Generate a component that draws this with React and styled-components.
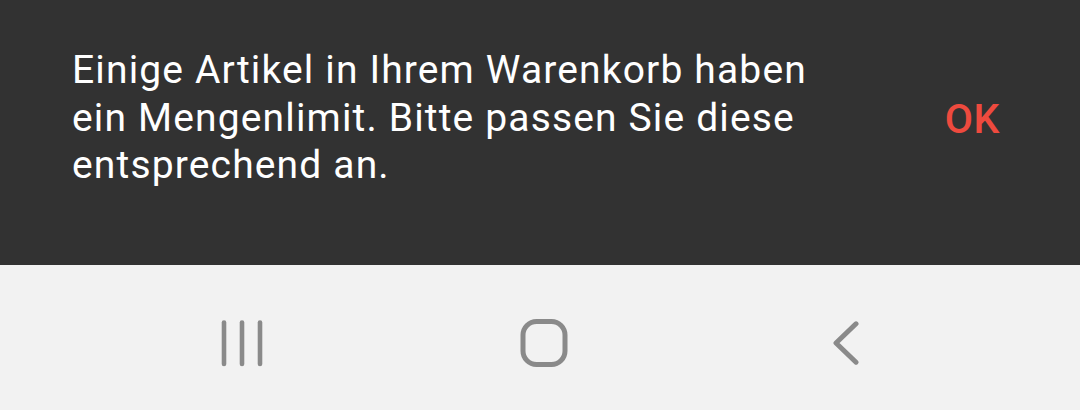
import React from "react";
import styled, { createGlobalStyle } from "styled-components";

const GlobalStyle = createGlobalStyle`
    html, body {
        margin: 0;
        padding: 0;
        background: #f2f2f2;
    }
    body {
        font-family: Roboto, "Noto Sans", "Liberation Sans", sans-serif;
        -webkit-font-smoothing: antialiased;
    }
`;

const iconGray = "#8a8a8a";

function RecentsIcon() {
    return <svg width="48" height="48" viewBox="0 0 48 48" fill="none">
        <g stroke={iconGray} strokeWidth="4.6" strokeLinecap="round">
            <line x1="6" y1="3.5" x2="6" y2="45" />
            <line x1="24" y1="3.5" x2="24" y2="45" />
            <line x1="42" y1="3.5" x2="42" y2="45" />
        </g>
    </svg>;
}

function HomeIcon() {
    return <svg width="48" height="48" viewBox="0 0 48 48" fill="none">
        <rect x="3" y="2.5" width="42" height="43" rx="13.5"
              stroke={iconGray} strokeWidth="5" />
    </svg>;
}

function BackIcon() {
    return <svg width="26" height="44" viewBox="0 0 26 44" fill="none">
        <path d="M23 2.8 L3 22 L23 41.2" stroke={iconGray} strokeWidth="5"
              strokeLinecap="round" strokeLinejoin="round" />
    </svg>;
}

function App() {
    return <Screen>
        <GlobalStyle />
        <Snackbar>
            <Message>
                Einige Artikel in Ihrem Warenkorb haben ein Mengenlimit. Bitte passen Sie diese entsprechend an.
            </Message>
            <ActionButton>OK</ActionButton>
        </Snackbar>
        <NavBar>
            <NavButton aria-label="Zuletzt verwendet"><RecentsIcon /></NavButton>
            <NavButton aria-label="Startbildschirm"><HomeIcon /></NavButton>
            <NavButton aria-label="Zurück"><BackIcon /></NavButton>
        </NavBar>
    </Screen>;
}

const Screen = styled.div`
    width: 1080px;
    height: 410px;
    display: flex;
    flex-direction: column;
    overflow: hidden;
`;
const Snackbar = styled.div`
    height: 265px;
    box-sizing: border-box;
    background-color: #323232;
    display: flex;
    align-items: flex-start;
    padding: 47px 80px 0 72px;
`;
const Message = styled.p`
    margin: 0;
    width: 780px;
    font-size: 39px;
    line-height: 47.5px;
    font-weight: 400;
    color: #ffffff;
    letter-spacing: 1.15px;
`;
const ActionButton = styled.button`
    margin-left: auto;
    margin-top: 49px;
    padding: 0;
    border: none;
    background: none;
    font-family: inherit;
    font-size: 41px;
    line-height: 47px;
    font-weight: 500;
    letter-spacing: 0.5px;
    color: #ee4a3e;
    cursor: pointer;
`;
const NavBar = styled.div`
    flex: 1;
    background-color: #f2f2f2;
    display: flex;
    align-items: center;
    padding: 10px 0 0 91px;
`;
const NavButton = styled.button`
    width: 302px;
    height: 60px;
    display: flex;
    align-items: center;
    justify-content: center;
    padding: 0;
    border: none;
    background: none;
    cursor: pointer;
`;

export default App;
